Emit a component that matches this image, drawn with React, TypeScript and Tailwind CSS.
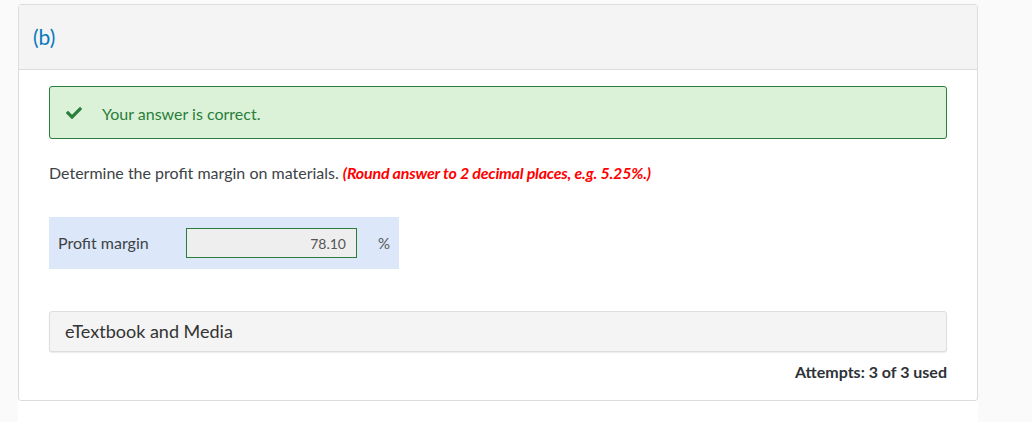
import { FaCheck } from "react-icons/fa";

export default function App() {
  return (
    <div className="h-[422px] w-full bg-[#fafafa] pt-[4px] font-['Lato','Open_Sans',sans-serif] text-[#3d4246]">
      <div className="ml-[18px] h-[418px] w-[960px] bg-white">
        <div className="rounded-[3px] border border-[#dcdcdc] bg-white">
          {/* header */}
          <div className="flex h-[65px] items-center border-b border-[#dcdcdc] bg-[#f4f4f4] px-[14px]">
            <span className="text-[21px] text-[#0b7bbd]">(b)</span>
          </div>

          <div className="px-[30px] pt-[16px] pb-[16px]">
            {/* correct alert */}
            <div className="flex h-[53px] items-center rounded-[3px] border border-[#2a7d3a] bg-[#dbf2d8] pl-[16px]">
              <FaCheck className="h-[16px] w-[16px] text-[#2a7d3a]" />
              <span className="ml-[20px] mt-[2px] text-[16px] text-[#2a7d3a]">
                Your answer is correct.
              </span>
            </div>

            <p className="mt-[22px] text-[16px] leading-[24px]">
              Determine the profit margin on materials.{" "}
              <span className="font-bold italic tracking-[-0.2px] text-[#ff0000]">
                (Round answer to 2 decimal places, e.g. 5.25%.)
              </span>
            </p>

            {/* answer row */}
            <div className="mt-[32px] flex h-[52px] w-[350px] items-center bg-[#dce8f9] pl-[9px]">
              <span className="w-[128px] text-[16px]">Profit margin</span>
              <div className="flex h-[30px] w-[171px] items-center justify-end border border-[#2a7d3a] bg-[#eeeeee] pr-[10px] text-[14px] text-[#555]">
                78.10
              </div>
              <span className="ml-[21px] text-[15px] text-[#555]">%</span>
            </div>

            {/* etextbook */}
            <div className="mt-[42px] flex h-[41px] items-center rounded-[3px] border border-[#dddddd] bg-[#f4f4f4] pl-[15px] shadow-[0_1px_1px_rgba(0,0,0,0.08)]">
              <span className="text-[18px] text-[#333]">eTextbook and Media</span>
            </div>

            <div className="mt-[8px] flex justify-end">
              <span className="text-[16px] leading-[24px] font-bold text-[#2d3238]">Attempts: 3 of 3 used</span>
            </div>
          </div>
        </div>
      </div>
    </div>
  );
}
